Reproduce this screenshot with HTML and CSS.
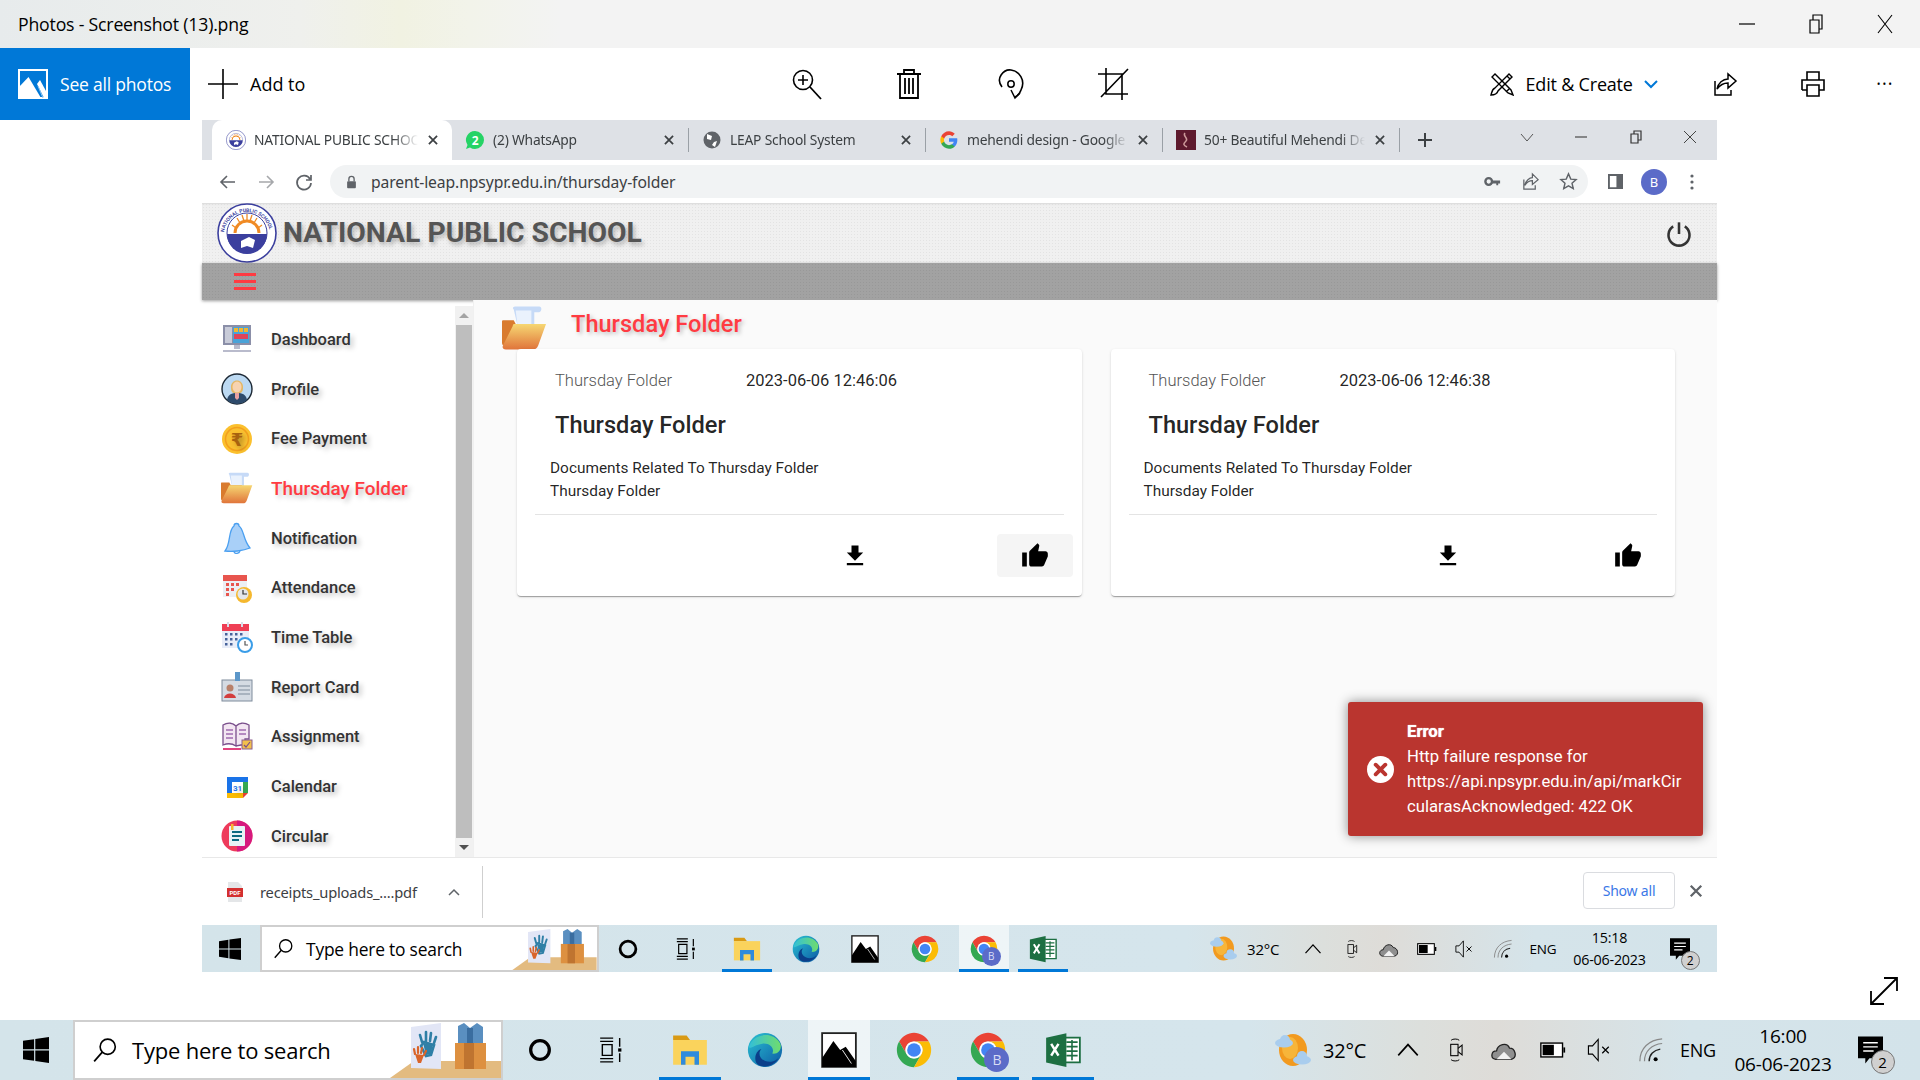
FILE: index.html
```html
<!DOCTYPE html>
<html lang="en">
	<head>
		<meta charset="UTF-8" />
		<meta name="viewport" content="width=device-width, initial-scale=1.0" />
		<title>Photos - Screenshot (13).png</title>
		<link rel="stylesheet" href="styles.css">
	</head>
	<body>
		<!-- shared icons -->
		<svg class="defs" aria-hidden="true">
			<defs>
				<linearGradient id="gFolder" x1="0" y1="0" x2="0" y2="1"><stop offset="0" stop-color="#f6d773"/><stop offset="1" stop-color="#e0743a"/></linearGradient>
				<linearGradient id="gEdge" x1="0" y1="0" x2="1" y2="1"><stop offset="0" stop-color="#2bc3d3"/><stop offset="1" stop-color="#0c59a4"/></linearGradient>
				<linearGradient id="gEdge2" x1="0" y1="0" x2="1" y2="0"><stop offset="0" stop-color="#33bfd8"/><stop offset="1" stop-color="#6fdc6e"/></linearGradient>
			</defs>
			<symbol id="i-win" viewBox="0 0 22 22"><path d="M0 3.2 9.4 1.8V10.4H0ZM10.4 1.6 22 0V10.4H10.4ZM0 11.4H9.4V20.2L0 18.8ZM10.4 11.4H22V22L10.4 20.4Z"/></symbol>
			<symbol id="i-mag" viewBox="0 0 24 24"><circle cx="14.5" cy="9" r="7" fill="none" stroke="currentColor" stroke-width="1.5"/><path d="M9.5 14 2 22.5" fill="none" stroke="currentColor" stroke-width="1.6"/></symbol>
			<symbol id="i-promo" viewBox="0 0 113 55">
				<path d="M0 55 24 38H113V55Z" fill="#e3bb80"/>
				<path d="M21 4 51 0V46L21 45Z" fill="#e2e6f6"/>
				<g fill="none" stroke="#2f7fa6" stroke-width="2.6" stroke-linecap="round"><path d="M32 19 30 12M36 18V9M40 18 41 10M44 20 46 14M31 23 36 33 41 32 44 22 34 19Z"/></g>
				<path d="M33 20 43 21 41 31 36 32Z" fill="#2f7fa6"/>
				<g fill="none" stroke="#d9642a" stroke-width="2.2" stroke-linecap="round"><path d="M25 31 24 26M28 30V24M31 30 32 25M34 32 36 28"/></g>
				<path d="M25 31 34 32 31 40 28 40Z" fill="#d9642a"/>
				<path d="M65 20H96V46H65Z" fill="#dd9040"/>
				<path d="M74 20H84V46H74Z" fill="#bf7430"/>
				<path d="M68 3 74 0 80 5 87 0 93 4V20H68Z" fill="#5a8fc0"/>
				<path d="M77 5H83V20H77Z" fill="#3a6d9f"/>
			</symbol>
			<symbol id="i-cortana" viewBox="0 0 24 24"><circle cx="12" cy="12" r="8.6" fill="none" stroke="currentColor" stroke-width="3"/></symbol>
			<symbol id="i-taskview" viewBox="0 0 24 24"><path d="M2 1H14M2 4H14M2 20H14M2 23H14M20 1V9M20 15V23M4 7H13V17H4Z" fill="none" stroke="currentColor" stroke-width="1.3"/><rect x="18.6" y="10.5" width="3" height="3"/></symbol>
			<symbol id="i-explorer" viewBox="0 0 32 32"><path d="M1 3H13L16 7H1Z" fill="#d99a14"/><path d="M1 7H31V29H1Z" fill="#fad35c"/><path d="M8 17H24V29H20V22H12V29H8Z" fill="#2f8bdc"/></symbol>
			<symbol id="i-edge" viewBox="0 0 40 40"><circle cx="20" cy="20" r="19" fill="url(#gEdge)"/><path d="M2 17C5 3 28-3 37 13 39 19 35 25 28 24 31 19 26 12 17 13 9 14 4 19 2 17Z" fill="url(#gEdge2)"/><path d="M16 19C11 24 15 34 27 33 30 33 33 31 35 29 31 37 20 41 12 36 7 32 9 21 16 19Z" fill="#0b3f8a"/></symbol>
			<symbol id="i-photos" viewBox="0 0 32 32"><rect x="1" y="1" width="30" height="30" fill="#fff" stroke="#222" stroke-width="1.6"/><path d="M1 29V23L11 8 17 16 22 13 31 26V31H1Z"/><path d="M19 16 27 28" stroke="#fff" stroke-width=".8"/></symbol>
			<symbol id="i-chrome" viewBox="3 3 42 42">
				<path d="M6.68 14A20 20 0 0 1 41.32 14H24a10 10 0 0 0-8.66 15z" fill="#ea4335"/>
				<path d="M6.68 14 15.34 29a10 10 0 0 0 17.32 0L24 44A20 20 0 0 1 6.68 14z" fill="#34a853"/>
				<path d="M41.32 14H24a10 10 0 0 1 8.66 15L24 44A20 20 0 0 0 41.32 14z" fill="#fbbc05"/>
				<circle cx="24" cy="24" r="10" fill="#fff"/><circle cx="24" cy="24" r="8" fill="#4285f4"/>
			</symbol>
			<symbol id="i-excel" viewBox="0 0 32 32"><path d="M13 5H31V27H13Z" fill="#fff" stroke="#1d6f42" stroke-width="1.600"/><path d="M19 9H29M19 13H29M19 17H29M19 21H29M24 7V25" stroke="#1d6f42" stroke-width="1.400"/><path d="M1 5 19 1V31L1 27Z" fill="#1d6f42"/><path d="M5.500 10.500 12 21M12 10.500 5.500 21" fill="none" stroke="#fff" stroke-width="2.200"/></symbol>
			<symbol id="i-weather" viewBox="0 0 36 32"><ellipse cx="18" cy="16" rx="14" ry="16" fill="#f29a1f"/><ellipse cx="15" cy="14" rx="8" ry="11" fill="#f7b53a"/><g fill="#a9cdee"><ellipse cx="9" cy="9" rx="9" ry="4.500"/><circle cx="10" cy="6" r="5"/><ellipse cx="27" cy="26" rx="9" ry="4.500"/><circle cx="27" cy="22" r="5"/></g></symbol>
			<symbol id="i-chev-up" viewBox="0 0 24 24"><path d="M3 17 12 7 21 17" fill="none" stroke="currentColor" stroke-width="1.5"/></symbol>
			<symbol id="i-meet" viewBox="0 0 18 32"><path d="M3 4C5 2 11 2 13 4M3 28C5 30 11 30 13 28" fill="none" stroke="currentColor" stroke-width="1.2"/><rect x="2.5" y="9" width="9" height="14" fill="none" stroke="currentColor" stroke-width="1.3"/><path d="M11.5 14 16.5 10V22L11.5 18" fill="none" stroke="currentColor" stroke-width="1.3"/></symbol>
			<symbol id="i-cloud" viewBox="0 0 28 24"><path d="M5 22C-1 21 0 13 6 13 7 6 17 3 20 10 26 10 29 20 22 22Z" fill="#8f8f8f" stroke="#222" stroke-width="1.4"/><path d="M6 22 14 14 22 22Z" fill="#f2f2f2"/></symbol>
			<symbol id="i-battery" viewBox="0 0 30 20"><rect x="1" y="2" width="25" height="16" fill="#fff" stroke="#000" stroke-width="1.6"/><rect x="3" y="4" width="13" height="12"/><rect x="27" y="7" width="2" height="6"/></symbol>
			<symbol id="i-speaker" viewBox="0 0 30 32"><path d="M2 11H7L14 3V29L7 21H2Z" fill="none" stroke="currentColor" stroke-width="1.4"/><path d="M19 12 27 20M27 12 19 20" stroke="currentColor" stroke-width="1.5"/></symbol>
			<symbol id="i-wifi" viewBox="0 0 28 28"><g fill="none" stroke="#888" stroke-width="1.3"><path d="M2 26C2 12 12 3 26 2M7 26C7 15 15 8 26 7"/></g><g fill="none" stroke="#222" stroke-width="1.5"><path d="M12 26C12 19 17 14 24 13"/></g><circle cx="19" cy="24" r="2.2"/></symbol>
			<symbol id="i-notif" viewBox="0 0 24 26"><path d="M0 0H24V21H11L7 26V21H0Z"/><path d="M5 6H19M5 10H19M5 14H15" stroke="#fff" stroke-width="1.4"/></symbol>
			<symbol id="i-x" viewBox="0 0 24 24"><path d="M5 5 19 19M19 5 5 19" fill="none" stroke="currentColor" stroke-width="3"/></symbol>
			<symbol id="i-logo" viewBox="0 0 60 60">
				<circle cx="30" cy="30" r="29" fill="#fff" stroke="#3b3f9e" stroke-width="1.6"/>
				<circle cx="30" cy="30" r="20" fill="#fff" stroke="#3b3f9e" stroke-width="1"/>
				<path d="M10 31H50A20 20 0 0 1 10 31Z" fill="#3b3f9e"/>
				<path d="M18 30A12 12 0 0 1 42 30" fill="none" stroke="#f08a24" stroke-width="3"/>
				<path d="M15 22 19 25M20 15 23 20M30 11V17M40 15 37 20M45 22 41 25M25 12 27 18M35 12 33 18" stroke="#f08a24" stroke-width="1.3"/>
				<path d="M24 38 32 34 38 37 36 45 30 43 24 45Z" fill="#fff"/>
			</symbol>
			<symbol id="i-open-folder" viewBox="0 0 46 44">
				<path d="M12 3C10 1 12 0 14 0H38C41 0 41 5 38 6H33V20H16Z" fill="#c6daf7"/>
				<path d="M14 4H30V20H16Z" fill="#eaf2fd"/>
				<path d="M1 14H12L14 18H30V40H3C1 40 0 39 0 37V16C0 15 0 14 1 14Z" fill="#d97b2e"/>
				<path d="M11 20C11 18 12 18 14 18H45L37 40C36 43 34 44 32 44H4C1 44 0 42 1 40Z" fill="url(#gFolder)"/>
			</symbol>
		</svg>

		<header class="titlebar">
			<span class="titlebar-text">Photos - Screenshot (13).png</span>
			<div class="window-ctrl">
				<svg class="ctl" viewBox="0 0 24 24"><path d="M4 12H20" stroke="#000" stroke-width="1.2"/></svg>
				<svg class="ctl" viewBox="0 0 24 24"><path d="M6 8H15V21H6ZM9 8V3H18V17H15" fill="none" stroke="#000" stroke-width="1.2"/></svg>
				<svg class="ctl" viewBox="0 0 24 24"><path d="M5 3 19 21M19 3 5 21" fill="none" stroke="#000" stroke-width="1.1"/></svg>
			</div>
		</header>

		<nav class="photos-bar">
			<a class="see-all">
				<svg class="see-all-ico" viewBox="0 0 30 30"><rect x="1" y="1" width="28" height="28" fill="none" stroke="#fff" stroke-width="2"/><path d="M1 29V18L10.500 8 23 29Z" fill="#fff"/><path d="M19 15 22 11 28 22V29H26Z" fill="#fff"/><path d="M20 17 25 29" stroke="#8fc4ef" stroke-width="1"/></svg>
				See all photos
			</a>
			<div class="add-to">
				<svg class="ico-30" viewBox="0 0 30 30"><path d="M15 0V30M0 15H30" stroke="#000" stroke-width="1.6"/></svg>
				<span>Add to</span>
			</div>
			<div class="tools">
				<svg class="ico-32" viewBox="0 0 32 32"><circle cx="12" cy="12" r="9.5" fill="none" stroke="#000" stroke-width="1.6"/><path d="M12 7V17M7 12H17" stroke="#000" stroke-width="1.6"/><path d="M19 19 30 31" stroke="#000" stroke-width="1.8"/></svg>
				<svg class="ico-32" viewBox="0 0 32 32"><path d="M4 6H28M11 6V2H21V6M7 6V30H25V6M12 10V26M16 10V26M20 10V26" fill="none" stroke="#000" stroke-width="1.8"/></svg>
				<svg class="ico-32" viewBox="0 0 32 32"><path d="M7 19C0 10 9 1 16 2 24 3 31 12 26 22 25 25 22 28 20 29" fill="none" stroke="#000" stroke-width="1.6"/><circle cx="16" cy="16" r="3.2" fill="none" stroke="#000" stroke-width="1.5"/><path d="M16 22 20 30 25 25" fill="none" stroke="#000" stroke-width="1.5"/></svg>
				<svg class="ico-32" viewBox="0 0 32 32"><path d="M9 0V26H31M1 6H25V32M4 29 31 1" fill="none" stroke="#000" stroke-width="1.6"/></svg>
			</div>
			<div class="photos-right">
				<svg class="edit-ico" viewBox="0 0 24 24"><path d="M2 5 5 2 21 18 23 23 18 21ZM16 20 20 16" fill="none" stroke="#000" stroke-width="1.400"/><path d="M22 5 19 2 5 16C2 17 2 20 1 23 4 23 7 22 8 19ZM17 4 20 7" fill="none" stroke="#000" stroke-width="1.400"/></svg>
				<span class="edit-label">Edit &amp; Create</span>
				<svg class="edit-chev" viewBox="0 0 14 10"><path d="M1 2 7 8 13 2" fill="none" stroke="#0078d7" stroke-width="2"/></svg>
				<svg class="ico-26 tb-share" viewBox="0 0 26 26"><path d="M3 10V24H19V19M5 18C6 12 11 8 16 8V3L24 10 16 17V12C12 12 8 14 5 18Z" fill="none" stroke="#000" stroke-width="1.5"/></svg>
				<svg class="ico-26 tb-print" viewBox="0 0 26 26"><path d="M7 9V1H19V9M2 19V9H24V19H19M7 19H2M7 14H19V25H7Z" fill="none" stroke="#000" stroke-width="1.6"/></svg>
				<span class="tb-more">&#8226;&#8226;&#8226;</span>
			</div>
		</nav>

		<div class="stage">
			<main class="browser">
				<div class="tabstrip">
					<div class="tab tab-active">
						<svg class="favicon"><use href="#i-logo"/></svg>
						<span class="tab-title">NATIONAL PUBLIC SCHOOL</span>
						<svg class="tab-x"><use href="#i-x"/></svg>
					</div>
					<div class="tab">
						<svg class="favicon" viewBox="0 0 20 20"><path d="M10 1A9 9 0 0 1 10 19 9 9 0 0 1 5 17.5L1 19 2.500 15A9 9 0 0 1 10 1Z" fill="#25d366"/><text class="wa-num" x="10" y="14.500">2</text></svg>
						<span class="tab-title">(2) WhatsApp</span>
						<svg class="tab-x"><use href="#i-x"/></svg>
					</div>
					<i class="tab-sep"></i>
					<div class="tab">
						<svg class="favicon" viewBox="0 0 20 20"><circle cx="10" cy="10" r="8.500" fill="#5f6368"/><path d="M5 4 10 6 9 10 5 9ZM12 12 15 11 13 17 10 15Z" fill="#fff"/></svg>
						<span class="tab-title">LEAP School System</span>
						<svg class="tab-x"><use href="#i-x"/></svg>
					</div>
					<i class="tab-sep"></i>
					<div class="tab">
						<svg class="favicon" viewBox="0 0 48 48"><path d="M44 24c0-1.400-.1-2.800-.4-4H24v8h11.300c-.5 2.500-2 4.800-4.300 6.300v5.200h6.800C41.700 35.800 44 30.400 44 24z" fill="#4285f4"/><path d="M24 45c5.700 0 10.500-1.900 13.800-5.500L31 34.300c-1.800 1.200-4.200 2-7 2-5.400 0-10-3.600-11.600-8.500H5.400v5.400C8.800 40.100 15.900 45 24 45z" fill="#34a853"/><path d="M12.400 27.800c-.9-2.500-.9-5.200 0-7.600v-5.400H5.400a21 21 0 0 0 0 18.400z" fill="#fbbc05"/><path d="M24 11.700c3 0 5.800 1 7.900 3.100l5.900-5.900C34.100 5.300 29.300 3 24 3 15.900 3 8.800 7.900 5.400 14.800l7 5.400C14 15.300 18.600 11.700 24 11.700z" fill="#ea4335"/></svg>
						<span class="tab-title">mehendi design - Google Search</span>
						<svg class="tab-x"><use href="#i-x"/></svg>
					</div>
					<i class="tab-sep"></i>
					<div class="tab">
						<svg class="favicon" viewBox="0 0 20 20"><rect width="20" height="20" fill="#5e1a2e"/><path d="M9 3C6 6 13 8 10 11S7 15 11 17" fill="none" stroke="#c99" stroke-width="1.500"/></svg>
						<span class="tab-title">50+ Beautiful Mehendi Designs</span>
						<svg class="tab-x"><use href="#i-x"/></svg>
					</div>
					<i class="tab-sep"></i>
					<svg class="tab-plus" viewBox="0 0 16 16"><path d="M8 1V15M1 8H15" stroke="#3c4043" stroke-width="2"/></svg>
					<svg class="chrome-ctl chrome-ctl-chev" viewBox="0 0 14 14"><path d="M1 4 7 11 13 4" fill="none" stroke="#555" stroke-width="1"/></svg>
					<svg class="chrome-ctl chrome-ctl-min" viewBox="0 0 14 14"><path d="M1 7H13" stroke="#555" stroke-width="1.300"/></svg>
					<svg class="chrome-ctl chrome-ctl-res" viewBox="0 0 14 14"><path d="M2 4H9V13H2ZM5 4V1H12V10H9" fill="none" stroke="#333" stroke-width="1.200"/></svg>
					<svg class="chrome-ctl chrome-ctl-x" viewBox="0 0 14 14"><path d="M1 1 13 13M13 1 1 13" fill="none" stroke="#444" stroke-width="1"/></svg>
				</div>

				<div class="omnibox">
					<svg class="omni-ico" viewBox="0 0 20 20"><path d="M17 10H4M9 4 3 10 9 16" fill="none" stroke="#5f6368" stroke-width="1.600"/></svg>
					<svg class="omni-ico" viewBox="0 0 20 20"><path d="M3 10H16M11 4 17 10 11 16" fill="none" stroke="#a6a8ab" stroke-width="1.600"/></svg>
					<svg class="omni-ico" viewBox="0 0 20 20"><path d="M16 7A7 7 0 1 0 17 11M17 3V8H12" fill="none" stroke="#5f6368" stroke-width="1.700"/></svg>
					<div class="url-pill">
						<svg class="lock" viewBox="0 0 12 16"><path d="M3 7V4.500A3 3 0 0 1 9 4.500V7" fill="none" stroke="#5f6368" stroke-width="1.500"/><rect x="1" y="7" width="10" height="8" rx="1" fill="#5f6368"/></svg>
						<span class="url-text">parent-leap.npsypr.edu.in/thursday-folder</span>
						<svg class="pill-ico" viewBox="0 0 20 20"><circle cx="6" cy="10" r="3.500" fill="none" stroke="#5f6368" stroke-width="2.500"/><path d="M9 9H18V12H16V14H14V12H9Z" fill="#5f6368"/></svg>
						<svg class="pill-ico" viewBox="0 0 20 20"><path d="M3 8V18H15V14M4 14C5 9 9 6 12 6V2L18 8 12 13V9C9 9 6 11 4 14Z" fill="none" stroke="#5f6368" stroke-width="1.300"/></svg>
						<svg class="pill-ico" viewBox="0 0 20 20"><path d="M10 2 12.400 7.500 18 8 13.700 11.800 15 17.500 10 14.500 5 17.500 6.300 11.800 2 8 7.600 7.500Z" fill="none" stroke="#5f6368" stroke-width="1.500"/></svg>
					</div>
					<svg class="side-panel" viewBox="0 0 16 16"><path d="M1 1H15V15H1Z" fill="none" stroke="#5f6368" stroke-width="2"/><rect x="9" y="1" width="6" height="14" fill="#5f6368"/></svg>
					<span class="avatar">B</span>
					<svg class="omni-dots" viewBox="0 0 4 16"><circle cx="2" cy="2" r="1.600" fill="#5f6368"/><circle cx="2" cy="8" r="1.600" fill="#5f6368"/><circle cx="2" cy="14" r="1.600" fill="#5f6368"/></svg>
				</div>

				<div class="app">
					<div class="app-header">
						<svg class="logo" viewBox="0 0 60 60">
							<use href="#i-logo" width="60" height="60"/>
							<path id="logoArc" d="M7 32A23 23 0 0 1 53 32" fill="none"/>
							<text class="logo-ring"><textPath href="#logoArc" startOffset="4%">NATIONAL PUBLIC SCHOOL</textPath></text>
						</svg>
						<h1 class="school-name">NATIONAL PUBLIC SCHOOL</h1>
						<svg class="power" viewBox="0 0 24 24"><path d="M12 2V12" stroke="#333" stroke-width="2.200" fill="none"/><path d="M7 5.500A9 9 0 1 0 17 5.500" stroke="#333" stroke-width="2.200" fill="none"/></svg>
					</div>
					<div class="app-bar"><span class="hamburger"><i></i><i></i><i></i></span></div>

					<div class="app-main">
						<aside class="sidenav">
							<a class="nav-item">
								<svg class="nav-ico" viewBox="0 0 32 32"><rect x="2" y="2" width="28" height="20" fill="#8b8fa8"/><rect x="4" y="4" width="7" height="16" fill="#c8cbd8"/><rect x="12" y="4" width="16" height="16" fill="#4aa3d8"/><rect x="13" y="5" width="4" height="4" fill="#f2b632"/><rect x="18" y="5" width="4" height="4" fill="#f2b632"/><rect x="23" y="5" width="4" height="4" fill="#f2b632"/><rect x="13" y="11" width="14" height="5" fill="#e0455a"/><path d="M13 22H19V26H13ZM2 27H30V29H2Z" fill="#b9bbcc"/></svg>
								Dashboard
							</a>
							<a class="nav-item">
								<svg class="nav-ico" viewBox="0 0 32 32"><circle cx="16" cy="16" r="15" fill="#bcd9f2" stroke="#1b2733" stroke-width="1.400"/><path d="M6 27C7 21 11 20 16 20S25 21 26 27C21 32 11 32 6 27Z" fill="#2d4a6b"/><path d="M14 20H18V25L16 27 14 25Z" fill="#e8a0a0"/><path d="M10 15C9 5 23 5 22 15 22 19 20 20 19 20H13C12 20 10 19 10 15Z" fill="#e4b765"/><ellipse cx="16" cy="14" rx="4.500" ry="5.500" fill="#f7d3b0"/></svg>
								Profile
							</a>
							<a class="nav-item">
								<svg class="nav-ico" viewBox="0 0 32 32"><circle cx="16" cy="16" r="15" fill="#fbc02d"/><circle cx="16" cy="16" r="11.500" fill="#fac030" stroke="#f29f1e" stroke-width="1.500"/><text class="rupee" x="16" y="22.500">&#8377;</text></svg>
								Fee Payment
							</a>
							<a class="nav-item nav-item-active">
								<svg class="nav-ico"><use href="#i-open-folder"/></svg>
								Thursday Folder
							</a>
							<a class="nav-item">
								<svg class="nav-ico" viewBox="0 0 32 32"><path d="M13 4A2.500 2.500 0 1 1 18 4C23 7 22 18 29 26 22 29 11 30 4 29 10 22 7 8 13 4Z" fill="#a9d0f8" stroke="#4a9ff0" stroke-width="1.300"/><path d="M13 30C14 32 18 32 19 29" fill="none" stroke="#4a9ff0" stroke-width="1.300"/></svg>
								Notification
							</a>
							<a class="nav-item">
								<svg class="nav-ico" viewBox="0 0 32 32"><rect x="2" y="3" width="24" height="22" fill="#eceff4"/><rect x="2" y="3" width="24" height="6" fill="#e8554e"/><g fill="#e8554e"><rect x="5" y="11" width="3" height="3"/><rect x="10" y="11" width="3" height="3"/><rect x="15" y="11" width="3" height="3"/><rect x="5" y="16" width="3" height="3"/><rect x="10" y="16" width="3" height="3"/><rect x="5" y="21" width="3" height="3"/></g><circle cx="23" cy="23" r="8" fill="#f5b82e"/><circle cx="22" cy="22" r="5.500" fill="#e3e6ea"/><path d="M22 18V22H26" fill="none" stroke="#333" stroke-width="1.200"/></svg>
								Attendance
							</a>
							<a class="nav-item">
								<svg class="nav-ico" viewBox="0 0 32 32"><rect x="1" y="3" width="27" height="24" fill="#e8edf8"/><rect x="1" y="3" width="27" height="7" fill="#ef3f55"/><path d="M7 1V6M21 1V6" stroke="#d8deea" stroke-width="2"/><g fill="#46629a"><rect x="4" y="12" width="2.500" height="2.500"/><rect x="9" y="12" width="2.500" height="2.500"/><rect x="14" y="12" width="2.500" height="2.500"/><rect x="19" y="12" width="2.500" height="2.500"/><rect x="4" y="17" width="2.500" height="2.500"/><rect x="9" y="17" width="2.500" height="2.500"/><rect x="14" y="17" width="2.500" height="2.500"/><rect x="4" y="22" width="2.500" height="2.500"/><rect x="9" y="22" width="2.500" height="2.500"/></g><circle cx="24" cy="24" r="7" fill="#fff" stroke="#3a9de8" stroke-width="2"/><path d="M24 20V24H27" fill="none" stroke="#555" stroke-width="1.200"/></svg>
								Time Table
							</a>
							<a class="nav-item">
								<svg class="nav-ico" viewBox="0 0 32 32"><rect x="1" y="9" width="30" height="21" fill="#d5dbe3" stroke="#7f8c9c"/><rect x="14" y="1" width="5" height="9" fill="#5c97c9"/><circle cx="9" cy="17" r="3.500" fill="#b8806a"/><path d="M3 27C4 21 14 21 15 27Z" fill="#d33d3d"/><path d="M17 15H29M17 19H29M17 23H29" stroke="#7f8c9c" stroke-width="1.200"/></svg>
								Report Card
							</a>
							<a class="nav-item">
								<svg class="nav-ico" viewBox="0 0 32 32"><path d="M2 4C7 1 12 2 15 5V25C12 23 7 22 2 24ZM15 5C18 2 23 1 28 4V18H24V24H20L15 25Z" fill="#f3e6f2" stroke="#7a4f8c" stroke-width="1.300"/><path d="M5 9H12M5 13H12M5 17H12M18 9H25M18 13H25" stroke="#a06bb0" stroke-width="1.300"/><rect x="21" y="19" width="10" height="9" fill="#f2c04c" stroke="#8a5e8f"/><path d="M23 24 25 26 29 21" fill="none" stroke="#7a4f8c" stroke-width="1.200"/><path d="M2 28H20" stroke="#e0427f" stroke-width="2"/></svg>
								Assignment
							</a>
							<a class="nav-item">
								<svg class="nav-ico" viewBox="0 0 32 32"><rect x="6" y="6" width="21" height="21" rx="1" fill="#fff"/><path d="M6 6H27V11H6Z" fill="#1a73e8"/><path d="M6 6H11V27H6Z" fill="#1a73e8"/><path d="M6 22H22V27H6Z" fill="#fbbc04"/><path d="M22 11H27V22H22Z" fill="#34a853"/><path d="M22 22H27L22 27Z" fill="#ea4335"/><text class="gcal-num" x="16.500" y="20">31</text></svg>
								Calendar
							</a>
							<a class="nav-item">
								<svg class="nav-ico" viewBox="0 0 32 32"><circle cx="16" cy="16" r="15.500" fill="#ee3b5b"/><path d="M16 .5A15.500 15.500 0 0 1 16 31.500Z" fill="#d6197e"/><rect x="8" y="6" width="16" height="20" rx="1" fill="#e8f3f6"/><path d="M11 12H21M11 16H21M11 20H18" stroke="#0b6a80" stroke-width="1.800"/><rect x="10" y="4" width="2.500" height="6" fill="#f4b731"/></svg>
								Circular
							</a>
						</aside>
						<div class="scrollbar">
							<span class="scroll-arrow scroll-up"></span>
							<span class="scroll-thumb"></span>
							<span class="scroll-arrow scroll-down"></span>
						</div>

						<section class="content">
							<div class="page-title">
								<svg class="page-title-ico"><use href="#i-open-folder"/></svg>
								<h2>Thursday Folder</h2>
							</div>
							<div class="cards">
								<article class="card">
									<div class="card-meta"><span class="card-type">Thursday Folder</span><span>2023-06-06 12:46:06</span></div>
									<h3 class="card-title">Thursday Folder</h3>
									<p class="card-text">Documents Related To Thursday Folder<br>Thursday Folder</p>
									<div class="card-actions">
										<span class="card-btn"><svg class="ico-28" viewBox="0 0 24 24"><path d="M19 9h-4V3H9v6H5l7 7 7-7zM5 18v2h14v-2H5z"/></svg></span>
										<span class="card-btn card-btn-hover"><svg class="ico-28" viewBox="0 0 24 24"><path d="M1 21h4V9H1v12zm22-11c0-1.100-.9-2-2-2h-6.310l.95-4.570.03-.32c0-.41-.17-.79-.44-1.060L14.170 1 7.590 7.590C7.220 7.950 7 8.450 7 9v10c0 1.100.9 2 2 2h9c.83 0 1.540-.5 1.840-1.220l3.020-7.050c.09-.23.14-.47.14-.73v-2z"/></svg></span>
									</div>
								</article>
								<article class="card">
									<div class="card-meta"><span class="card-type">Thursday Folder</span><span>2023-06-06 12:46:38</span></div>
									<h3 class="card-title">Thursday Folder</h3>
									<p class="card-text">Documents Related To Thursday Folder<br>Thursday Folder</p>
									<div class="card-actions">
										<span class="card-btn"><svg class="ico-28" viewBox="0 0 24 24"><path d="M19 9h-4V3H9v6H5l7 7 7-7zM5 18v2h14v-2H5z"/></svg></span>
										<span class="card-btn"><svg class="ico-28" viewBox="0 0 24 24"><path d="M1 21h4V9H1v12zm22-11c0-1.100-.9-2-2-2h-6.310l.95-4.570.03-.32c0-.41-.17-.79-.44-1.060L14.170 1 7.590 7.590C7.220 7.950 7 8.450 7 9v10c0 1.100.9 2 2 2h9c.83 0 1.540-.5 1.840-1.220l3.020-7.050c.09-.23.14-.47.14-.73v-2z"/></svg></span>
									</div>
								</article>
							</div>
							<div class="toast">
								<svg class="toast-ico" viewBox="0 0 28 28"><circle cx="14" cy="14" r="14" fill="#fff"/><path d="M9 9 19 19M19 9 9 19" stroke="#ba352f" stroke-width="4" stroke-linecap="round"/></svg>
								<div class="toast-body">
									<strong>Error</strong>
									<div>Http failure response for https://api.npsypr.edu.in/api/markCircularasAcknowledged: 422 OK</div>
								</div>
							</div>
						</section>
					</div>
				</div>

				<div class="download-bar">
					<svg class="pdf-ico" viewBox="0 0 16 20"><path d="M1 0H11L15 4V20H1Z" fill="#e4e6e8"/><rect y="6" width="16" height="9" fill="#d32f2f"/><text class="pdf-text" x="8" y="13">PDF</text></svg>
					<span class="download-name">receipts_uploads_....pdf</span>
					<svg class="download-chev" viewBox="0 0 12 8"><path d="M1 7 6 2 11 7" fill="none" stroke="#5f6368" stroke-width="1.500"/></svg>
					<i class="download-sep"></i>
					<button class="show-all">Show all</button>
					<svg class="download-x"><use href="#i-x"/></svg>
				</div>

				<div class="taskbar taskbar-inner">
					<svg class="task-start"><use href="#i-win"/></svg>
					<div class="task-search">
						<svg class="task-mag"><use href="#i-mag"/></svg>
						<span class="task-search-text">Type here to search</span>
						<svg class="task-promo"><use href="#i-promo"/></svg>
					</div>
					<svg class="task-cortana"><use href="#i-cortana"/></svg>
					<svg class="task-view"><use href="#i-taskview"/></svg>
					<div class="task-apps">
						<span class="task-app is-open"><svg class="app-folder"><use href="#i-explorer"/></svg></span>
						<span class="task-app"><svg><use href="#i-edge"/></svg></span>
						<span class="task-app"><svg><use href="#i-photos"/></svg></span>
						<span class="task-app"><svg><use href="#i-chrome"/></svg></span>
						<span class="task-app is-open is-active"><svg><use href="#i-chrome"/></svg><b class="profile-badge">B</b></span>
						<span class="task-app is-open"><svg><use href="#i-excel"/></svg></span>
					</div>
					<div class="tray">
						<svg class="tray-weather"><use href="#i-weather"/></svg>
						<span class="tray-temp">32°C</span>
						<svg class="tray-ico"><use href="#i-chev-up"/></svg>
						<svg class="tray-ico"><use href="#i-meet"/></svg>
						<svg class="tray-ico"><use href="#i-cloud"/></svg>
						<svg class="tray-ico"><use href="#i-battery"/></svg>
						<svg class="tray-ico"><use href="#i-speaker"/></svg>
						<svg class="tray-ico"><use href="#i-wifi"/></svg>
						<span class="tray-lang">ENG</span>
						<span class="tray-clock">15:18<br>06-06-2023</span>
						<span class="tray-notif"><svg><use href="#i-notif"/></svg><b>2</b></span>
					</div>
				</div>
			</main>
			<svg class="expand" viewBox="0 0 30 30"><path d="M2 28 28 2M15 2H28V15M2 15V28H15" fill="none" stroke="#000" stroke-width="1.800"/></svg>
		</div>

		<footer class="taskbar taskbar-outer">
			<svg class="task-start"><use href="#i-win"/></svg>
			<div class="task-search">
				<svg class="task-mag"><use href="#i-mag"/></svg>
				<span class="task-search-text">Type here to search</span>
				<svg class="task-promo"><use href="#i-promo"/></svg>
			</div>
			<svg class="task-cortana"><use href="#i-cortana"/></svg>
			<svg class="task-view"><use href="#i-taskview"/></svg>
			<div class="task-apps">
				<span class="task-app is-open"><svg class="app-folder"><use href="#i-explorer"/></svg></span>
				<span class="task-app"><svg><use href="#i-edge"/></svg></span>
				<span class="task-app is-open is-active"><svg><use href="#i-photos"/></svg></span>
				<span class="task-app"><svg><use href="#i-chrome"/></svg></span>
				<span class="task-app is-open"><svg><use href="#i-chrome"/></svg><b class="profile-badge">B</b></span>
				<span class="task-app is-open"><svg><use href="#i-excel"/></svg></span>
			</div>
			<div class="tray">
				<svg class="tray-weather"><use href="#i-weather"/></svg>
				<span class="tray-temp">32°C</span>
				<svg class="tray-ico"><use href="#i-chev-up"/></svg>
				<svg class="tray-ico"><use href="#i-meet"/></svg>
				<svg class="tray-ico"><use href="#i-cloud"/></svg>
				<svg class="tray-ico"><use href="#i-battery"/></svg>
				<svg class="tray-ico"><use href="#i-speaker"/></svg>
				<svg class="tray-ico"><use href="#i-wifi"/></svg>
				<span class="tray-lang">ENG</span>
				<span class="tray-clock">16:00<br>06-06-2023</span>
				<span class="tray-notif"><svg><use href="#i-notif"/></svg><b>2</b></span>
			</div>
		</footer>
	</body>
</html>
```

FILE: styles.css
```css
* {
	box-sizing: border-box;
}
html,
body {
	margin: 0;
	height: 100%;
}
body {
	width: 1920px;
	height: 1080px;
	overflow: hidden;
	display: flex;
	flex-direction: column;
	background: #fff;
	font-family: "Open Sans", "Noto Sans", sans-serif;
	color: #000;
}
.defs {
	position: absolute;
	width: 0;
	height: 0;
}
svg {
	display: block;
	flex: none;
}
.ico-26 { width: 26px; height: 26px; }
.ico-28 { width: 28px; height: 28px; }
.ico-30 { width: 30px; height: 30px; }
.ico-32 { width: 32px; height: 32px; }

/* photos window */
.titlebar {
	height: 48px;
	flex: none;
	display: flex;
	align-items: center;
	padding-left: 18px;
	background: linear-gradient(90deg, #e7ebec 0, #eff0ed 300px, #f1f2e2 400px, #f2f3ea 470px, #f3f3f3 560px);
}
.titlebar-text {
	font-size: 17.700px;
	letter-spacing: -0.2px;
}
.window-ctrl {
	margin-left: auto;
	display: flex;
	gap: 45px;
	padding-right: 23px;
}
.ctl {
	width: 24px;
	height: 24px;
}
.photos-bar {
	height: 72px;
	flex: none;
	display: flex;
	align-items: center;
}
.see-all {
	width: 190px;
	height: 72px;
	display: flex;
	align-items: center;
	gap: 12px;
	padding-left: 18px;
	background: #0078d7;
	color: #fff;
	font-size: 17.500px;
	letter-spacing: -0.2px;
}
.see-all-ico {
	width: 30px;
	height: 30px;
}
.add-to {
	width: 566px;
	display: flex;
	align-items: center;
	gap: 12px;
	padding-left: 18px;
	font-size: 18px;
}
.tools {
	width: 408px;
	display: flex;
	justify-content: space-between;
	padding: 0 35px;
}
.photos-right {
	margin-left: auto;
	display: flex;
	align-items: center;
	padding-right: 26px;
}
.edit-ico {
	width: 24px;
	height: 24px;
}
.edit-label {
	margin-left: 12px;
	font-size: 18px;
	letter-spacing: -0.2px;
}
.edit-chev {
	width: 14px;
	height: 10px;
	margin-left: 11px;
}
.tb-share { margin-left: 54px; }
.tb-print { margin-left: 62px; }
.tb-more {
	margin-left: 51px;
	font-size: 10px;
	letter-spacing: 2px;
}

/* browser */
.stage {
	height: 900px;
	flex: none;
	display: flex;
	align-items: flex-end;
	padding-left: 202px;
}
.browser {
	width: 1515px;
	height: 852px;
	margin-bottom: 48px;
	display: flex;
	flex-direction: column;
	font-family: "Noto Sans", "Open Sans", sans-serif;
}
.expand {
	width: 30px;
	height: 30px;
	margin: 0 0 14px 152px;
}
.tabstrip {
	height: 40px;
	flex: none;
	display: flex;
	align-items: center;
	padding-left: 10px;
	background: #dee1e6;
}
.tab {
	width: 236px;
	height: 40px;
	display: flex;
	align-items: center;
	gap: 8px;
	padding: 0 12px 0 13px;
	font-size: 13.800px;
	color: #3c4043;
	letter-spacing: -0.2px;
}
.tab-active {
	width: 240px;
	padding: 0 12px 0 14px;
	background: #fff;
	border-radius: 10px 10px 0 0;
}
.favicon {
	width: 20px;
	height: 20px;
}
.tab-title {
	flex: 1;
	padding-bottom: 2px;
	overflow: hidden;
	white-space: nowrap;
	-webkit-mask-image: linear-gradient(90deg, #000 85%, transparent);
	mask-image: linear-gradient(90deg, #000 85%, transparent);
}
.tab-x {
	width: 14px;
	height: 14px;
	color: #3c4043;
}
.tab-sep {
	width: 1px;
	height: 24px;
	background: #9aa0a6;
}
.wa-num {
	font: bold 12px "Noto Sans", sans-serif;
	fill: #fff;
	text-anchor: middle;
}
.tab-plus {
	width: 16px;
	height: 16px;
	margin-left: 17px;
}
.chrome-ctl {
	width: 14px;
	height: 14px;
	align-self: flex-start;
	margin-top: 10px;
}
.chrome-ctl-chev { margin-left: 87px; }
.chrome-ctl-min { margin-left: 40px; }
.chrome-ctl-res { margin-left: 41px; }
.chrome-ctl-x { margin-left: 40px; }
.omnibox {
	height: 43px;
	flex: none;
	display: flex;
	align-items: center;
	padding-left: 16px;
	background: #fff;
}
.omni-ico {
	width: 20px;
	height: 20px;
	margin-right: 18px;
}
.url-pill {
	width: 1258px;
	height: 33px;
	margin-left: -2px;
	display: flex;
	align-items: center;
	padding: 0 10px 0 16px;
	border-radius: 17px;
	background: #f1f3f4;
}
.lock {
	width: 11px;
	height: 14px;
}
.url-text {
	flex: 1;
	margin-left: 14px;
	font-size: 15.700px;
	letter-spacing: -0.1px;
	color: #3c4043;
}
.pill-ico {
	width: 19px;
	height: 19px;
	margin-left: 19px;
}
.side-panel {
	width: 15px;
	height: 15px;
	margin-left: 20px;
}
.avatar {
	width: 26px;
	height: 26px;
	margin-left: 18px;
	border-radius: 50%;
	background: #5b6bc8;
	color: #fff;
	font-size: 13px;
	line-height: 26px;
	text-align: center;
}
.omni-dots {
	width: 4px;
	height: 16px;
	margin-left: 23px;
}

/* school app */
.app {
	flex: 1;
	min-height: 0;
	display: flex;
	flex-direction: column;
	font-family: Roboto, sans-serif;
}
.app-header {
	height: 60px;
	flex: none;
	display: flex;
	align-items: center;
	padding-left: 15px;
	background-color: #f0f0f0;
	background-image: radial-gradient(#e3e3e3 0.7px, transparent 0.8px);
	background-size: 3px 3px;
	box-shadow: inset 0 2px 2px -1px #d8d8d8;
}
.logo {
	width: 60px;
	height: 60px;
}
.logo-ring {
	font: bold 5px Roboto, sans-serif;
	fill: #3b3f9e;
}
.school-name {
	margin: 0 0 2px 6px;
	font-size: 28.300px;
	font-weight: 700;
	color: #555;
	text-shadow: 2px 3px 4px rgba(0, 0, 0, 0.25);
}
.power {
	width: 28px;
	height: 28px;
	margin: 1px 24px 0 auto;
}
.app-bar {
	height: 37px;
	flex: none;
	display: flex;
	align-items: center;
	padding-left: 32px;
	background-color: #a2a2a2;
	background-image: radial-gradient(#989898 0.7px, transparent 0.8px);
	background-size: 3px 3px;
	box-shadow: 0 1px 3px rgba(0, 0, 0, 0.4);
	position: relative;
}
.hamburger {
	display: flex;
	flex-direction: column;
	gap: 4px;
}
.hamburger i {
	display: block;
	width: 22px;
	height: 3px;
	background: #ff3b42;
}
.app-main {
	flex: 1;
	min-height: 0;
	display: flex;
}
.sidenav {
	width: 253px;
	flex: none;
	padding-top: 14.500px;
	background: #fff;
}
.nav-item {
	height: 49.700px;
	display: flex;
	align-items: center;
	gap: 18px;
	padding-left: 19px;
	font-size: 16.500px;
	font-weight: 500;
	color: #333;
	text-shadow: 3px 3px 5px rgba(0, 0, 0, 0.25);
}
.nav-item-active {
	color: #ff3b42;
	font-size: 18.900px;
}
.nav-ico {
	width: 32px;
	height: 32px;
}
.rupee {
	font: bold 18px "DejaVu Sans", sans-serif;
	fill: #a8620f;
	text-anchor: middle;
}
.gcal-num {
	font: bold 8px Roboto, sans-serif;
	fill: #1a73e8;
	text-anchor: middle;
}
.scrollbar {
	width: 18px;
	flex: none;
	margin-top: 6px;
	display: flex;
	flex-direction: column;
	background: #f1f1f1;
}
.scroll-arrow {
	height: 19px;
	flex: none;
	display: flex;
	align-items: center;
	justify-content: center;
}
.scroll-arrow::before {
	content: "";
	border-left: 5px solid transparent;
	border-right: 5px solid transparent;
}
.scroll-up::before {
	border-bottom: 5px solid #a3a3a3;
}
.scroll-down::before {
	border-top: 5px solid #505050;
}
.scroll-thumb {
	flex: 1;
	margin: 0 1px;
	background: #bebebe;
}
.content {
	flex: 1;
	position: relative;
	padding-top: 6px;
	background: #fafafa;
	box-shadow: inset 1px 0 0 #f0f0f0;
}
.page-title {
	height: 44px;
	display: flex;
	margin-left: 29px;
	gap: 24px;
}
.page-title-ico {
	width: 45px;
	height: 44px;
}
.page-title h2 {
	margin: 0;
	font-size: 23.600px;
	font-weight: 500;
	line-height: 36px;
	color: #ff3b42;
	text-shadow: 2px 2px 4px rgba(0, 0, 0, 0.25);
}
.cards {
	display: flex;
	gap: 29px;
	margin-left: 44px;
	margin-top: -1px;
}
.card {
	width: 564.500px;
	height: 247px;
	padding-top: 18px;
	border-radius: 4px;
	background: #fff;
	box-shadow: 0 2px 1px -1px rgba(0, 0, 0, 0.2), 0 1px 1px rgba(0, 0, 0, 0.14), 0 1px 3px rgba(0, 0, 0, 0.12);
}
.card-meta {
	display: flex;
	padding-left: 38px;
	font-size: 16.500px;
	line-height: 28px;
	color: rgba(0, 0, 0, 0.87);
}
.card-type {
	width: 191px;
	font-weight: 300;
	color: #555;
}
.card-title {
	margin: 13px 0 0 38px;
	font-size: 23.600px;
	font-weight: 500;
	line-height: 34px;
	color: rgba(0, 0, 0, 0.87);
}
.card-text {
	margin: 15px 18px 0;
	padding: 0 0 11px 15px;
	border-bottom: 1px solid #e4e4e4;
	font-size: 15.400px;
	line-height: 23px;
	color: rgba(0, 0, 0, 0.87);
}
.card-actions {
	margin: 0 9px 0 18px;
	padding: 19px 0 0;
	display: flex;
	justify-content: flex-end;
	gap: 104px;
}
.card-btn {
	width: 76px;
	height: 43px;
	display: flex;
	align-items: center;
	justify-content: center;
	border-radius: 4px;
}
.card-btn-hover {
	background: #f5f5f5;
}
.toast {
	position: absolute;
	top: 402px;
	left: 875px;
	width: 355px;
	height: 134px;
	display: flex;
	align-items: center;
	gap: 13px;
	padding: 0 0 0 19px;
	border-radius: 3px;
	background: #ba352f;
	color: #fff;
	font-size: 16.700px;
	line-height: 25px;
	box-shadow: 0 0 12px rgba(0, 0, 0, 0.45);
}
.toast-ico {
	width: 27px;
	height: 27px;
}
.toast-body {
	width: 280px;
	overflow-wrap: anywhere;
}
.toast-body strong {
	display: block;
	text-shadow: 0 0 1px #fff;
}

/* downloads shelf */
.download-bar {
	height: 68px;
	flex: none;
	display: flex;
	align-items: center;
	padding-left: 25px;
	background: #fff;
	border-top: 1px solid #e8e8e8;
	color: #3c4043;
}
.pdf-ico {
	width: 16px;
	height: 20px;
}
.pdf-text {
	font: bold 6px Roboto, sans-serif;
	fill: #fff;
	text-anchor: middle;
}
.download-name {
	width: 188px;
	margin-left: 17px;
	font-size: 14.700px;
	letter-spacing: -0.2px;
}
.download-chev {
	width: 12px;
	height: 8px;
}
.download-sep {
	width: 1px;
	height: 52px;
	margin-left: 22px;
	background: #cfcfcf;
}
.show-all {
	width: 92px;
	height: 37px;
	margin: 0 0 2px auto;
	border: 1px solid #dadce0;
	border-radius: 4px;
	background: #fff;
	font: 14px "Noto Sans", sans-serif;
	letter-spacing: -0.2px;
	color: #3b78e7;
}
.download-x {
	width: 18px;
	height: 18px;
	margin: 0 12px 2px 12px;
	color: #5f6368;
}

/* windows taskbars, the outer one and the one inside the shot */
.taskbar {
	display: flex;
	align-items: center;
	flex: none;
	color: #000;
	font-family: "Open Sans", "Noto Sans", sans-serif;
	letter-spacing: -0.2px;
	background: linear-gradient(90deg, #d4e4ea 0, #d5e5ec 65%, #dcdfdc 74%, #dedcd8 78%, #d5e4ea 88%, #d3e3ea 100%);
}
.taskbar-outer {
	height: 60px;
}
.taskbar-inner {
	height: 47px;
}
.task-start {
	width: 22px;
	height: 22px;
}
.taskbar-outer .task-start {
	width: 26px;
	height: 26px;
	margin: 0 24px 0 23px;
}
.taskbar-inner .task-start {
	margin: 0 19px 0 17px;
}
.task-search {
	height: 100%;
	display: flex;
	align-items: center;
	overflow: hidden;
	background: #fff;
	border: 2px solid #cfcfcf;
}
.taskbar-outer .task-search {
	width: 430px;
	font-size: 22px;
	padding-left: 17px;
}
.taskbar-inner .task-search {
	width: 339px;
	font-size: 17.400px;
	padding-left: 11px;
}
.task-mag {
	width: 26px;
	height: 26px;
}
.taskbar-inner .task-mag {
	width: 21px;
	height: 21px;
}
.task-search-text {
	margin-left: 14px;
}
.taskbar-inner .task-search-text {
	margin-left: 12px;
}
.task-promo {
	margin-left: auto;
	margin-right: -2px;
	align-self: flex-end;
}
.taskbar-outer .task-promo {
	width: 113px;
	height: 55px;
}
.taskbar-inner .task-promo {
	width: 89px;
	height: 41px;
}
.task-cortana {
	width: 26px;
	height: 26px;
}
.taskbar-outer .task-cortana {
	margin-left: 24px;
}
.taskbar-inner .task-cortana {
	margin-left: 18px;
	width: 22px;
	height: 22px;
}
.task-view {
	width: 26px;
	height: 26px;
}
.taskbar-outer .task-view {
	margin-left: 45px;
}
.taskbar-inner .task-view {
	margin-left: 36px;
	width: 22px;
	height: 22px;
}
.task-apps {
	height: 100%;
	display: flex;
}
.taskbar-outer .task-apps {
	margin-left: 35px;
	gap: 12.600px;
}
.taskbar-inner .task-apps {
	margin-left: 25px;
	gap: 9.200px;
}
.task-app {
	height: 100%;
	display: flex;
	align-items: center;
	justify-content: center;
	position: relative;
}
.taskbar-outer .task-app {
	width: 62px;
}
.taskbar-inner .task-app {
	width: 50px;
}
.taskbar-outer .task-app svg {
	width: 36px;
	height: 36px;
}
.taskbar-inner .task-app svg {
	width: 28px;
	height: 28px;
}
.task-app.is-open::after {
	content: "";
	position: absolute;
	left: 0;
	right: 0;
	bottom: 0;
	height: 3px;
	background: #0078d7;
}
.task-app.is-active {
	background: rgba(255, 255, 255, 0.6);
}
.profile-badge {
	position: absolute;
	right: 10px;
	bottom: 8px;
	width: 25px;
	height: 25px;
	border-radius: 50%;
	background: #5b6bc8;
	color: #d8dcf5;
	font-size: 14px;
	font-weight: 400;
	line-height: 25px;
	text-align: center;
}
.taskbar-inner .profile-badge {
	right: 8px;
	bottom: 6px;
	width: 19px;
	height: 19px;
	font-size: 10px;
	line-height: 19px;
}
.tray {
	height: 100%;
	margin-left: auto;
	display: grid;
	align-items: center;
	justify-items: center;
}
.taskbar-outer .tray {
	grid-template-columns: 60px 53px 64px 32px 64px 34px 58px 46px 48px 122px 52px;
	padding-right: 24px;
	font-size: 20px;
}
.taskbar-inner .tray {
	grid-template-columns: 40px 48px 44px 34px 40px 36px 38px 40px 40px 93px 47px;
	padding-right: 14px;
	font-size: 15px;
}
.taskbar-outer .tray-weather {
	width: 36px;
	height: 32px;
}
.taskbar-inner .tray-weather {
	width: 27px;
	height: 25px;
}
.tray-temp {
	justify-self: start;
}
.taskbar-inner .tray-temp {
	margin-left: 4px;
}
.taskbar-outer .tray-ico {
	width: 26px;
	height: 26px;
}
.taskbar-inner .tray-ico {
	width: 20px;
	height: 20px;
}
.tray-lang {
	font-size: 0.900em;
}
.tray-clock {
	text-align: center;
	font-size: 19px;
}
.taskbar-outer .tray-clock {
	line-height: 28px;
}
.taskbar-inner .tray-clock {
	font-size: 14.300px;
	line-height: 22px;
}
.tray-notif {
	position: relative;
	display: block;
}
.taskbar-outer .tray-notif svg {
	width: 25px;
	height: 28px;
}
.taskbar-inner .tray-notif svg {
	width: 20px;
	height: 24px;
}
.tray-notif b {
	position: absolute;
	right: -12px;
	bottom: -10px;
	width: 24px;
	height: 24px;
	border-radius: 50%;
	border: 1px solid #777;
	background: #d0d0d0;
	font-size: 15px;
	font-weight: 400;
	line-height: 22px;
	text-align: center;
}
.taskbar-inner .tray-notif b {
	right: -10px;
	bottom: -9px;
	width: 19px;
	height: 19px;
	font-size: 12px;
	line-height: 17px;
}
.app-folder {
	height: 32px;
}
```
